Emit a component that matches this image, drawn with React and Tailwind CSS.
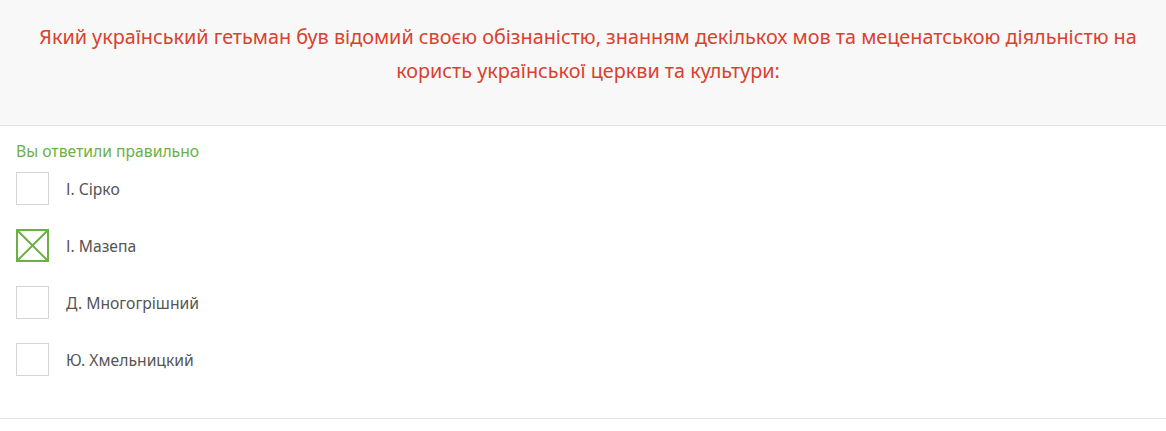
import React from "react";

const answers = [
  { label: "І. Сірко", checked: false },
  { label: "І. Мазепа", checked: true },
  { label: "Д. Многогрішний", checked: false },
  { label: "Ю. Хмельницкий", checked: false },
];

function Box({ checked }) {
  if (!checked) {
    return <div className="w-[33px] h-[33px] shrink-0 border border-[#d4d4d4] bg-white" />;
  }
  return (
    <div className="w-[33px] h-[33px] shrink-0 border-2 border-[#6cb045] bg-white">
      <svg viewBox="0 0 29 29" className="w-full h-full block">
        <line x1="0" y1="0" x2="29" y2="29" stroke="#6cb045" strokeWidth="2" />
        <line x1="29" y1="0" x2="0" y2="29" stroke="#6cb045" strokeWidth="2" />
      </svg>
    </div>
  );
}

export default function App() {
  return (
    <div className="w-[1166px] min-h-[431px] bg-white" style={{ fontFamily: '"Noto Sans", "Open Sans", sans-serif' }}>
      {/* Question */}
      <div className="bg-[#f8f8f8] border-b border-[#e3e3e3] pt-[20px] pb-[37px] pl-[26px] pr-[16px] text-center">
        <p className="text-[19.8px] leading-[34px] text-[#d9412f] whitespace-nowrap">
          Який український гетьман був відомий своєю обізнаністю, знанням декількох мов та меценатською діяльністю на
          <br />
          користь української церкви та культури:
        </p>
      </div>

      {/* Answers */}
      <div className="px-4 pt-[15px] pb-[42px] border-b border-[#e3e3e3]">
        <div className="text-[15.7px] leading-[20px] text-[#6cb045] mb-[11px]">Вы ответили правильно</div>
        <div className="flex flex-col gap-[24px]">
          {answers.map((a) => (
            <div key={a.label} className="flex items-center gap-[17px]">
              <Box checked={a.checked} />
              <span className="text-[15.7px] leading-[22px] pt-[1px] text-[#555]">{a.label}</span>
            </div>
          ))}
        </div>
      </div>
    </div>
  );
}
